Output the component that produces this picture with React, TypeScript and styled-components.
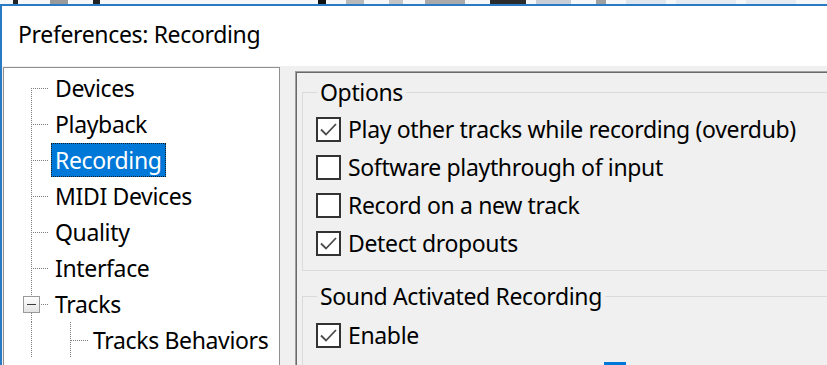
import React from 'react';
import styled, { createGlobalStyle } from 'styled-components';

const Global = createGlobalStyle`
  html, body { margin: 0; padding: 0; width: 827px; height: 365px; overflow: hidden; background: #fff; }
  body { font-family: 'Noto Sans', 'Open Sans', sans-serif; color: #000; letter-spacing: -0.35px; }
  * { box-sizing: border-box; }
`;

const Window = styled.div`
  width: 827px;
  height: 365px;
  display: flex;
  flex-direction: column;
  overflow: hidden;
`;

const TopStrip = styled.div`
  height: 4px;
  display: flex;
  background: #f5f7f9;
  flex-shrink: 0;
`;

const StripBit = styled.div<{ $w: number; $c: string; $ml: number }>`
  width: ${(p) => p.$w}px;
  margin-left: ${(p) => p.$ml}px;
  background: ${(p) => p.$c};
  height: 100%;
  flex-shrink: 0;
`;

const Frame = styled.div`
  flex: 1;
  display: flex;
  flex-direction: column;
  border-left: 2px solid #2a79c3;
  border-top: 2px solid #2a79c3;
  min-height: 0;
`;

const TitleBar = styled.div`
  height: 60px;
  flex-shrink: 0;
  background: #fff;
  display: flex;
  align-items: center;
  padding: 0 0 4px 16px;
  font-size: 23px;
  color: #000;
`;

const Body = styled.div`
  flex: 1;
  display: flex;
  align-items: flex-start;
  background: #f0f0f0;
  padding: 1px 0 0 1px;
  min-height: 0;
`;

const TreePanel = styled.div`
  width: 277px;
  height: 320px;
  flex-shrink: 0;
  background: #fff;
  border: 1px solid #8f8f8f;
  padding-top: 2px;
  overflow: hidden;
`;

const TreeRow = styled.div`
  height: 36px;
  display: flex;
  align-items: center;
`;

const TreeLabel = styled.span<{ $selected?: boolean }>`
  font-size: 23px;
  line-height: 34px;
  padding: 0 4px;
  white-space: nowrap;
  color: ${(p) => (p.$selected ? '#fff' : '#000')};
  background: ${(p) => (p.$selected ? '#0078d7' : 'transparent')};
  outline: ${(p) => (p.$selected ? '1px dotted #1a1a1a' : 'none')};
  outline-offset: -1px;
`;

const GuideSvg = styled.svg`
  flex-shrink: 0;
  display: block;
`;

type GuideKind = 'first' | 'mid' | 'expander' | 'child';

const DOT = { stroke: '#7c7c7c', strokeWidth: 1, strokeDasharray: '1 1' };

function Guide({ kind }: { kind: GuideKind }) {
  const w = kind === 'child' ? 85 : 47;
  return (
    <GuideSvg width={w} height={36} viewBox={`0 0 ${w} 36`} shapeRendering="crispEdges">
      <defs>
        <linearGradient id="exp" x1="0" y1="0" x2="0" y2="1">
          <stop offset="0" stopColor="#ffffff" />
          <stop offset="1" stopColor="#e2e2e2" />
        </linearGradient>
      </defs>
      {kind === 'first' && <line x1={27.5} y1={18} x2={27.5} y2={36} {...DOT} />}
      {kind === 'mid' && <line x1={27.5} y1={0} x2={27.5} y2={36} {...DOT} />}
      {kind === 'child' && (
        <>
          <line x1={27.5} y1={0} x2={27.5} y2={36} {...DOT} />
          <line x1={66.5} y1={0} x2={66.5} y2={36} {...DOT} />
          <line x1={67} y1={18.5} x2={84} y2={18.5} {...DOT} />
        </>
      )}
      {(kind === 'first' || kind === 'mid') && <line x1={29} y1={18.5} x2={45} y2={18.5} {...DOT} />}
      {kind === 'expander' && (
        <>
          <line x1={27.5} y1={0} x2={27.5} y2={10} {...DOT} />
          <line x1={27.5} y1={27} x2={27.5} y2={36} {...DOT} />
          <rect x={19.5} y={10.5} width={16} height={16} fill="url(#exp)" stroke="#9a9a9a" />
          <line x1={23} y1={18.5} x2={32} y2={18.5} stroke="#3c3c3c" strokeWidth={1} />
          <line x1={37} y1={18.5} x2={45} y2={18.5} {...DOT} />
        </>
      )}
    </GuideSvg>
  );
}

const RightPanel = styled.div`
  width: 600px;
  height: 310px;
  flex-shrink: 0;
  margin: 4px 0 0 15px;
  border-top: 1px solid #a0a0a0;
  border-left: 1px solid #a0a0a0;
  box-shadow: inset 1px 1px 0 #6a6a6a;
  background: #f0f0f0;
  padding: 1px 0 0 6px;
`;

const GroupBox = styled.fieldset<{ $gapTop: number; $padTop: number }>`
  margin: ${(p) => p.$gapTop}px 0 0 0;
  padding: ${(p) => p.$padTop}px 0 8px 13px;
  border: 1px solid #dadada;
  min-width: 0;
`;

const GroupLegend = styled.legend`
  font-size: 23px;
  line-height: 30px;
  padding: 0 3px;
  margin-left: 1px;
  color: #000;
`;

const CheckRow = styled.label`
  height: 38px;
  display: flex;
  align-items: center;
  gap: 7px;
  font-size: 23px;
  color: #000;
  white-space: nowrap;
`;

const Box = styled.span`
  width: 25px;
  height: 25px;
  border: 2px solid #333;
  background: #fff;
  flex-shrink: 0;
  display: flex;
  align-items: center;
  justify-content: center;
`;

const SliderRow = styled.div`
  height: 30px;
  margin-top: 8px;
  padding-left: 288px;
`;

const Thumb = styled.div`
  width: 22px;
  height: 22px;
  background: #0078d7;
`;

function Check({ checked, label }: { checked: boolean; label: string }) {
  return (
    <CheckRow>
      <Box>
        {checked && (
          <svg width="21" height="21" viewBox="0 0 21 21">
            <path d="M3 10.5 L8 15.5 L18 5" fill="none" stroke="#4a4a4a" strokeWidth="1.8" />
          </svg>
        )}
      </Box>
      {label}
    </CheckRow>
  );
}

const strip: [number, string, number][] = [
  [5, '#222', 13],
  [18, '#9a9a9a', 32],
  [7, '#222', 25],
  [8, '#111', 218],
  [18, '#b9b9b9', 20],
  [14, '#c4c4c4', 25],
  [40, '#a9a9a9', 22],
  [36, '#2b2b2b', 25],
  [35, '#c9ced6', 10],
  [10, '#a0a0a0', 25],
  [40, '#dfe6ee', 20],
  [60, '#e6ebf1', 10],
  [50, '#e6ebf1', 10],
];

const tree: { label: string; kind: GuideKind; selected?: boolean }[] = [
  { label: 'Devices', kind: 'first' },
  { label: 'Playback', kind: 'mid' },
  { label: 'Recording', kind: 'mid', selected: true },
  { label: 'MIDI Devices', kind: 'mid' },
  { label: 'Quality', kind: 'mid' },
  { label: 'Interface', kind: 'mid' },
  { label: 'Tracks', kind: 'expander' },
  { label: 'Tracks Behaviors', kind: 'child' },
];

export default function App() {
  return (
    <>
      <Global />
      <Window>
        <TopStrip>
          {strip.map(([w, c, ml], i) => (
            <StripBit key={i} $w={w} $c={c} $ml={ml} />
          ))}
        </TopStrip>
        <Frame>
          <TitleBar>Preferences: Recording</TitleBar>
          <Body>
            <TreePanel>
              {tree.map((t) => (
                <TreeRow key={t.label}>
                  <Guide kind={t.kind} />
                  <TreeLabel $selected={t.selected}>{t.label}</TreeLabel>
                </TreeRow>
              ))}
            </TreePanel>
            <RightPanel>
              <GroupBox $gapTop={4} $padTop={3}>
                <GroupLegend>Options</GroupLegend>
                <Check checked label="Play other tracks while recording (overdub)" />
                <Check checked={false} label="Software playthrough of input" />
                <Check checked={false} label="Record on a new track" />
                <Check checked label="Detect dropouts" />
              </GroupBox>
              <GroupBox $gapTop={10} $padTop={5}>
                <GroupLegend>Sound Activated Recording</GroupLegend>
                <Check checked label="Enable" />
                <SliderRow>
                  <Thumb />
                </SliderRow>
              </GroupBox>
            </RightPanel>
          </Body>
        </Frame>
      </Window>
    </>
  );
}
